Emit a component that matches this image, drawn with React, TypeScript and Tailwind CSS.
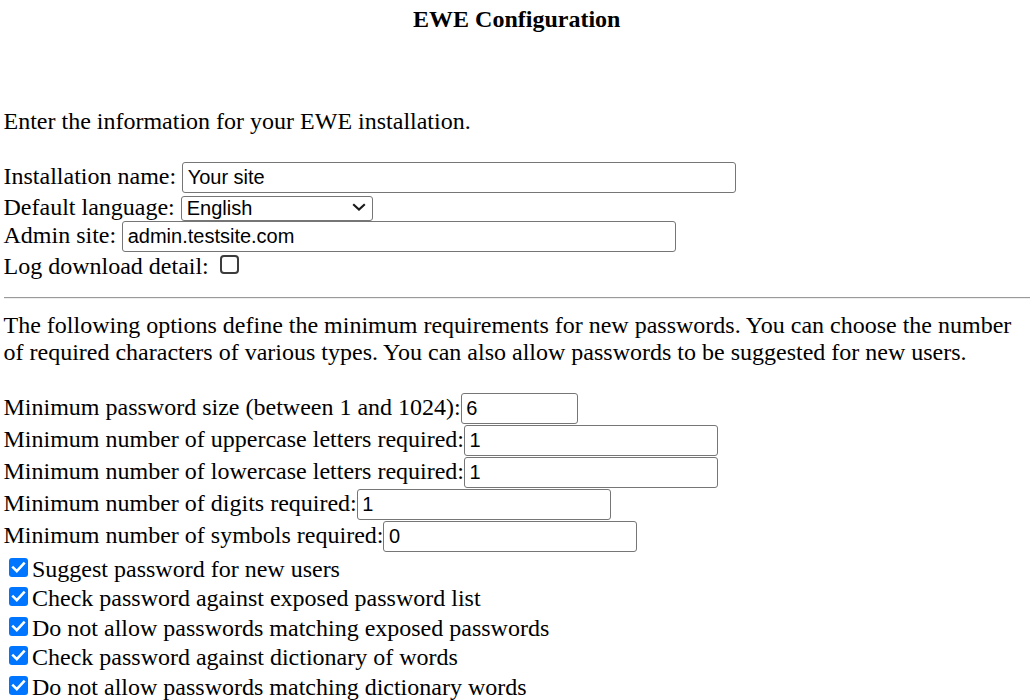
import React from "react";

function CheckedBox() {
  return (
    <span className="inline-block align-baseline w-[19px] h-[19px] rounded-[3px] bg-[#0075ff] ml-[5.5px] mr-[4px] relative">
      <svg className="absolute left-0 top-0" width="19" height="19" viewBox="0 0 19 19">
        <polyline points="4.2,9.6 7.8,13.2 14.8,5.6" fill="none" stroke="#ffffff" strokeWidth="2.6" strokeLinecap="square" />
      </svg>
    </span>
  );
}

function TextInput({ value, w }: { value: string; w: string }) {
  return (
    <input
      readOnly
      defaultValue={value}
      className={`${w} h-[31px] mb-[1px] align-baseline border border-[#767676] rounded-[3px] bg-white pl-[4.5px] pr-[2px] font-['Liberation_Sans',Arial,sans-serif] text-[20px] leading-[normal] text-black outline-none`}
    />
  );
}

export default function App() {
  const checks = [
    "Suggest password for new users",
    "Check password against exposed password list",
    "Do not allow passwords matching exposed passwords",
    "Check password against dictionary of words",
    "Do not allow passwords matching dictionary words",
  ];
  return (
    <div className="min-h-[700px] bg-white text-black font-['Liberation_Serif','Times_New_Roman',serif] text-[24px] leading-[normal] pl-[3.5px] pr-[5px] overflow-hidden">
      <div className="pt-[6px] text-center font-bold">EWE Configuration</div>
      <div className="mt-[74.8px]">Enter the information for your EWE installation.</div>

      <div className="mt-[27.7px]">
        Installation name: <TextInput value="Your site" w="w-[554px]" />
      </div>
      <div>
        Default language:{" "}
        <span className="relative inline-block align-baseline">
          <select
            defaultValue="English"
            className="appearance-none w-[192px] h-[25.5px] border border-[#767676] rounded-[3px] bg-white pl-[5px] font-['Liberation_Sans',Arial,sans-serif] text-[20px] leading-[normal] text-black outline-none"
          >
            <option>English</option>
          </select>
          <svg className="absolute right-[7px] top-[8.5px] pointer-events-none" width="14" height="8" viewBox="0 0 14 8">
            <polyline points="1.2,1.2 7,6.6 12.8,1.2" fill="none" stroke="#1a1a1a" strokeWidth="2.1" />
          </svg>
        </span>
      </div>
      <div>
        Admin site: <TextInput value="admin.testsite.com" w="w-[554px]" />
      </div>
      <div>
        Log download detail:{" "}
        <span className="inline-block align-baseline w-[19px] h-[19px] rounded-[4px] border-2 border-[#3c3c3c] bg-white ml-[5px]" />
      </div>

      <div className="mt-[17px] h-[2px] border-t border-t-[#9a9a9a] border-b border-b-[#eeeeee]" />

      <p className="mt-[12.6px]">
        The following options define the minimum requirements for new passwords. You can choose the number of
        required characters of various types. You can also allow passwords to be suggested for new users.
      </p>

      <div className="mt-[27px]">
        <div>
          Minimum password size (between 1 and 1024):<TextInput value="6" w="w-[117px]" />
        </div>
        <div>
          Minimum number of uppercase letters required:<TextInput value="1" w="w-[254px]" />
        </div>
        <div>
          Minimum number of lowercase letters required:<TextInput value="1" w="w-[254px]" />
        </div>
        <div>
          Minimum number of digits required:<TextInput value="1" w="w-[254px]" />
        </div>
        <div>
          Minimum number of symbols required:<TextInput value="0" w="w-[254px]" />
        </div>
      </div>

      <div className="mt-[2.8px]">
        {checks.map((c) => (
          <div key={c} className="h-[29.5px] whitespace-nowrap">
            <CheckedBox />
            {c}
          </div>
        ))}
      </div>
    </div>
  );
}
